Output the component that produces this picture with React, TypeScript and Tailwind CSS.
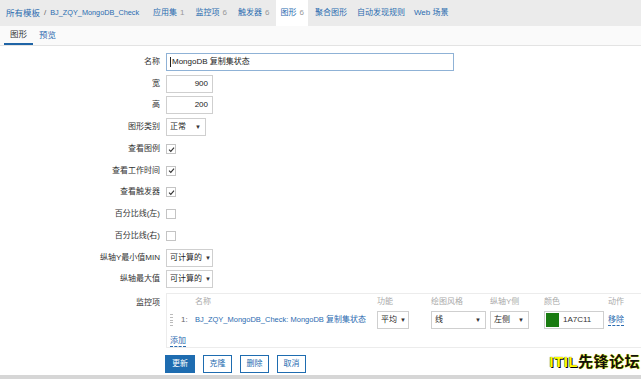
import React from "react";

const FONT = { fontFamily: '"Liberation Sans", "Noto Sans CJK SC", sans-serif' };

function Arrow() {
  return <span className="ml-[3px] shrink-0 text-[6px] leading-none text-[#333]">▼</span>;
}

function Select({ value, w }: { value: string; w: string }) {
  return (
    <div
      className={`flex h-[18px] ${w} items-center justify-between whitespace-nowrap border border-[#cfcfcf] bg-white pl-[3px] pr-[4px] text-[8px] text-[#1f1f1f]`}
    >
      <span>{value}</span>
      <Arrow />
    </div>
  );
}

function Check({ on }: { on: boolean }) {
  return (
    <div className="flex h-[10px] w-[10px] items-center justify-center border border-[#c4c4c4] bg-white">
      {on && (
        <svg viewBox="0 0 10 10" className="h-[7px] w-[7px]" aria-hidden="true">
          <path d="M1.5 5.2 4 7.6 8.6 2.2" fill="none" stroke="#333" strokeWidth="1.6" />
        </svg>
      )}
    </div>
  );
}

function Row({ label, h, children }: { label: string; h: string; children: React.ReactNode }) {
  return (
    <div className={`flex ${h} items-center`}>
      <div className="w-[160px] text-right text-[8px] text-[#333]">{label}</div>
      <div className="ml-[6px] flex items-center">{children}</div>
    </div>
  );
}

const tabs = [
  { t: "应用集", n: "1", ml: "ml-[14px]" },
  { t: "监控项", n: "6", ml: "ml-[11px]" },
  { t: "触发器", n: "6", ml: "ml-[11px]" },
];

export default function App() {
  return (
    <div className="relative h-[379px] w-[641px] overflow-hidden bg-white" style={FONT}>
      {/* top nav */}
      <div className="flex h-[26px] items-stretch bg-[#ebebeb] pl-[6px] text-[8px] text-[#2a6bb0]">
        <div className="flex items-center">
          <span className="text-[8.5px]">所有模板</span>
          <span className="mx-[4px] text-[#666]">/</span>
          <span className="text-[7.3px]">BJ_ZQY_MongoDB_Check</span>
        </div>
        {tabs.map((x) => (
          <div key={x.t} className={`${x.ml} flex items-center`}>
            {x.t}
            <span className="ml-[3px] text-[#999]">{x.n}</span>
          </div>
        ))}
        <div className="ml-[7px] flex items-center bg-white px-[4px]">
          图形<span className="ml-[3px] text-[#999]">6</span>
        </div>
        <div className="ml-[7px] flex items-center">聚合图形</div>
        <div className="ml-[10px] flex items-center">自动发现规则</div>
        <div className="ml-[9px] flex items-center">Web 场景</div>
      </div>

      {/* sub tabs */}
      <div className="flex h-[20px] items-stretch border-b border-[#e3e3e3] bg-[#fafafa] text-[8.5px]">
        <div className="ml-[4px] flex items-center border-b-2 border-[#1f64a6] px-[6px] text-[#333]">图形</div>
        <div className="ml-[2px] flex items-center px-[4px] text-[#2a6bb0]">预览</div>
      </div>

      {/* form */}
      <div className="pt-[5px]">
        <Row label="名称" h="h-[22px]">
          <div className="flex h-[18px] w-[288px] items-center border border-[#8fb2d6] bg-white pl-[3px] text-[8px] text-[#222]">
            <span className="mr-[1px] h-[10px] w-px bg-[#222]" />
            MongoDB 复制集状态
          </div>
        </Row>
        <Row label="宽" h="h-[21px]">
          <div className="flex h-[18px] w-[47px] items-center justify-end border border-[#cfcfcf] pr-[4px] text-[8px] text-[#222]">900</div>
        </Row>
        <Row label="高" h="h-[22px]">
          <div className="flex h-[18px] w-[47px] items-center justify-end border border-[#cfcfcf] pr-[4px] text-[8px] text-[#222]">200</div>
        </Row>
        <Row label="图形类别" h="h-[22px]">
          <Select value="正常" w="w-[40px]" />
        </Row>
        <Row label="查看图例" h="h-[22px]">
          <Check on />
        </Row>
        <Row label="查看工作时间" h="h-[21px]">
          <Check on />
        </Row>
        <Row label="查看触发器" h="h-[22px]">
          <Check on />
        </Row>
        <Row label="百分比线(左)" h="h-[22px]">
          <Check on={false} />
        </Row>
        <Row label="百分比线(右)" h="h-[22px]">
          <Check on={false} />
        </Row>
        <Row label="纵轴Y最小值MIN" h="h-[21px]">
          <Select value="可计算的" w="w-[47px]" />
        </Row>
        <Row label="纵轴最大值" h="h-[22px]">
          <Select value="可计算的" w="w-[47px]" />
        </Row>

        {/* items */}
        <div className="mt-[3px] flex">
          <div className="w-[160px] pt-[4px] text-right text-[8px] text-[#333]">监控项</div>
          <div className="ml-[6px] h-[55px] flex-1 border-l border-t border-b border-[#ececec] text-[8px]">
            <div className="flex h-[14px] items-end text-[#aaa]">
              <div className="w-[28px]" />
              <div className="w-[182px]">名称</div>
              <div className="w-[54px]">功能</div>
              <div className="w-[59px]">绘图风格</div>
              <div className="w-[54px]">纵轴Y侧</div>
              <div className="w-[64px]">颜色</div>
              <div>动作</div>
            </div>
            <div className="mt-[2px] flex h-[20px] items-center">
              <div className="ml-[3px] mr-[8px] flex h-[12px] w-[3px] flex-col justify-between">
                {[0, 1, 2, 3, 4].map((i) => (
                  <span key={i} className="h-px w-[3px] bg-[#bbb]" />
                ))}
              </div>
              <div className="w-[14px] text-[#666]">1:</div>
              <div className="w-[182px] whitespace-nowrap text-[#2a6bb0]">
                <span className="text-[7.5px]">BJ_ZQY_MongoDB_Check: MongoDB</span> 复制集状态
              </div>
              <div className="w-[54px]">
                <Select value="平均" w="w-[32px]" />
              </div>
              <div className="w-[59px]">
                <Select value="线" w="w-[55px]" />
              </div>
              <div className="w-[54px]">
                <Select value="左侧" w="w-[39px]" />
              </div>
              <div className="w-[64px]">
                <div className="flex h-[18px] w-[60px] items-center border border-[#cfcfcf] pl-[1px] text-[#333]">
                  <span className="h-[14px] w-[13px] bg-[#1a7c11]" />
                  <span className="ml-[4px]">1A7C11</span>
                </div>
              </div>
              <div className="border-b border-dashed border-[#2a6bb0] leading-[11px] text-[#2a6bb0]">移除</div>
            </div>
            <div className="mt-[5px] ml-[3px] inline-block border-b border-dashed border-[#2a6bb0] leading-[11px] text-[#2a6bb0]">
              添加
            </div>
          </div>
        </div>

        {/* buttons */}
        <div className="ml-[165px] mt-[7px] flex gap-[8px] text-[8px]">
          <div className="flex h-[18px] w-[30px] items-center justify-center bg-[#1e6cb0] text-white">更新</div>
          {["克隆", "删除", "取消"].map((b) => (
            <div
              key={b}
              className="flex h-[18px] w-[29px] items-center justify-center border border-[#1e6cb0] bg-white text-[#1e6cb0]"
            >
              {b}
            </div>
          ))}
        </div>
      </div>

      {/* watermark */}
      <div
        className="absolute right-[1px] bottom-[6px] text-[15px] font-bold tracking-[0.5px]"
        style={{ textShadow: "0 0 1px #000, 1px 1px 0 #000" }}
      >
        <span className="text-[#ffff00]">ITIL</span>
        <span className="text-[#111]" style={{ textShadow: "0 0 1px #ff0, 1px 0 0 #ee0" }}>
          先锋论坛
        </span>
      </div>
      <div className="absolute bottom-0 left-0 h-[4px] w-full bg-[#d6d6d6]" />
    </div>
  );
}
